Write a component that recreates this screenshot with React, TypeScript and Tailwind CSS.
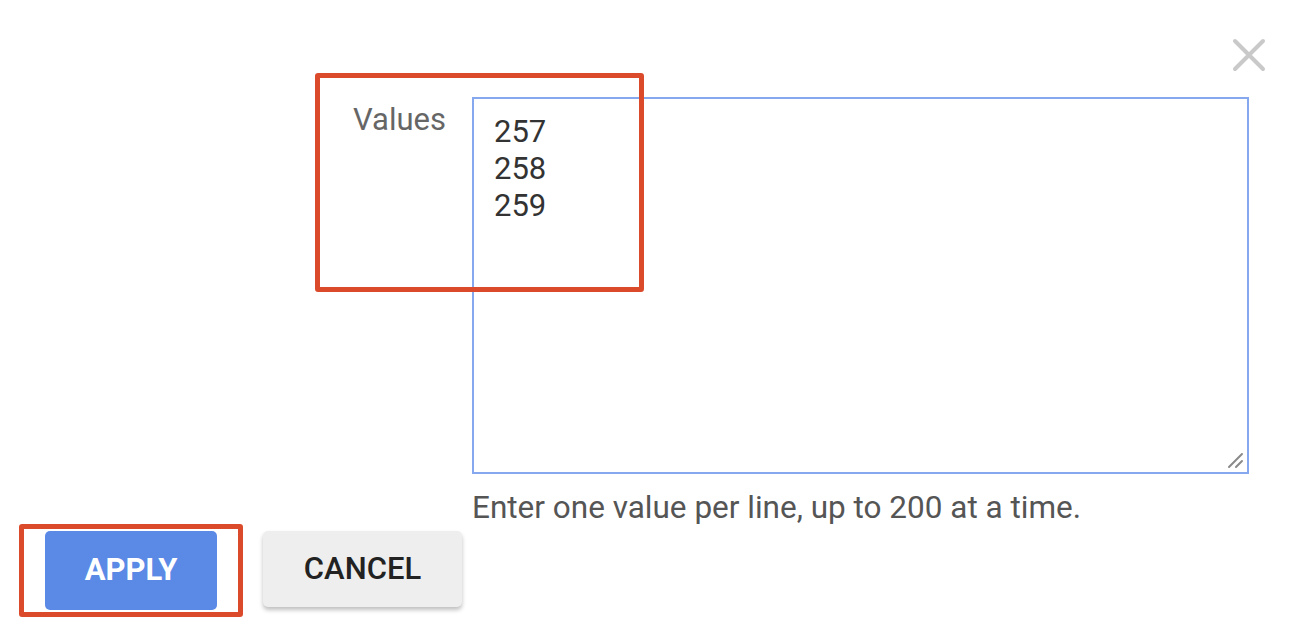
import React from "react";

export default function App() {
  return (
    <div
      className="relative w-[1304px] h-[636px] bg-white overflow-hidden"
      style={{ fontFamily: "Roboto, 'Liberation Sans', Arial, sans-serif" }}
    >
      {/* close icon row */}
      <div className="flex justify-end pt-[38px] pr-[38px]">
        <svg width="34" height="34" viewBox="0 0 34 34" fill="none">
          <path d="M3 3 L31 31 M31 3 L3 31" stroke="#c9c9c9" strokeWidth="4" strokeLinecap="round" />
        </svg>
      </div>

      {/* field row */}
      <div className="flex mt-[25px]">
        <div className="w-[472px] shrink-0 pr-[26px] pt-[5px] text-right text-[31px] leading-[36px] text-[#666666]">
          Values
        </div>
        <div className="flex flex-col">
          <div className="relative w-[777px] h-[377px] border-2 border-[#86a8ef] pl-[20px] pt-[14px] text-[31px] leading-[37px] text-[#333333]">
            <div>257</div>
            <div>258</div>
            <div>259</div>
            <svg
              className="absolute right-[3px] bottom-[3px]"
              width="18"
              height="18"
              viewBox="0 0 18 18"
              fill="none"
            >
              <path d="M3 16 L16 3 M10 16 L16 10" stroke="#8a8a8a" strokeWidth="2" strokeLinecap="round" />
            </svg>
          </div>
          <div className="pt-[16px] text-[31.5px] leading-[36px] text-[#555555]">
            Enter one value per line, up to 200 at a time.
          </div>
        </div>
      </div>

      {/* buttons */}
      <div className="flex items-start gap-[46px] pl-[45px] mt-[5px]">
        <button className="w-[172px] h-[79px] rounded-[5px] bg-[#5a89e6] text-white font-bold text-[31px]">
          APPLY
        </button>
        <button className="w-[199px] h-[76px] rounded-[5px] bg-[#eeeeee] text-[#222222] font-medium text-[31px] shadow-[0_3px_4px_rgba(0,0,0,0.25)]">
          CANCEL
        </button>
      </div>

      {/* annotation boxes */}
      <div className="absolute left-[315px] top-[73px] w-[329px] h-[219px] border-[5px] border-[#dc4a2c] rounded-[3px]" />
      <div className="absolute left-[19px] top-[524px] w-[224px] h-[93px] border-[5px] border-[#dc4a2c] rounded-[3px]" />
    </div>
  );
}
